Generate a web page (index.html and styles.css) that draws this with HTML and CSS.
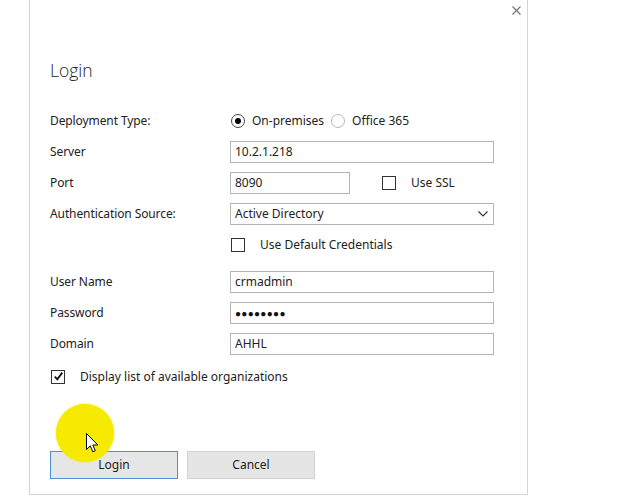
FILE: index.html
```html
<!DOCTYPE html>
<html>
<head>
<meta charset="utf-8">
<link rel="stylesheet" href="styles.css">
</head>
<body>
<div class="dialog">
  <div class="close">
    <svg width="9" height="9" viewBox="0 0 9 9"><path d="M0.5 0.5L8.5 8.5M8.5 0.5L0.5 8.5" stroke="#777" stroke-width="1.2"/></svg>
  </div>
  <div class="title">Login</div>
  <div class="form">
    <div class="row">
      <div class="label">Deployment Type:</div>
      <div class="ctrl">
        <span class="radio on"></span><span class="rtext">On-premises</span>
        <span class="radio"></span><span class="rtext">Office 365</span>
      </div>
    </div>
    <div class="row">
      <div class="label">Server</div>
      <div class="ctrl"><div class="input">10.2.1.218</div></div>
    </div>
    <div class="row">
      <div class="label">Port</div>
      <div class="ctrl">
        <div class="input short">8090</div>
        <span class="check ssl"></span><span class="ctext">Use SSL</span>
      </div>
    </div>
    <div class="row">
      <div class="label">Authentication Source:</div>
      <div class="ctrl">
        <div class="input select">Active Directory
          <svg class="chev" width="10" height="6" viewBox="0 0 10 6"><path d="M0.5 0.5L5 5L9.5 0.5" fill="none" stroke="#333" stroke-width="1.1"/></svg>
        </div>
      </div>
    </div>
    <div class="row">
      <div class="label"></div>
      <div class="ctrl"><span class="check cred"></span><span class="ctext">Use Default Credentials</span></div>
    </div>
    <div class="row gap">
      <div class="label">User Name</div>
      <div class="ctrl"><div class="input">crmadmin</div></div>
    </div>
    <div class="row">
      <div class="label">Password</div>
      <div class="ctrl"><div class="input pwd">●●●●●●●●</div></div>
    </div>
    <div class="row">
      <div class="label">Domain</div>
      <div class="ctrl"><div class="input">AHHL</div></div>
    </div>
    <div class="row disp">
      <span class="check checked"><svg width="11" height="11" viewBox="0 0 11 11"><path d="M1.8 5.6L4.3 8.3L9.3 1.6" fill="none" stroke="#111" stroke-width="1.8"/></svg></span>
      <span class="ctext wide">Display list of available organizations</span>
    </div>
  </div>
  <div class="buttons">
    <div class="btn primary">Login</div>
    <div class="btn">Cancel</div>
  </div>
  <div class="spot"></div>
  <svg class="cursor" width="13" height="21" viewBox="0 0 13 21"><path d="M0.5 0.5L0.5 16.5L4.3 12.8L6.8 18.8L9.3 17.8L6.8 12L11.8 12Z" fill="#fff" stroke="#000" stroke-width="1" stroke-linejoin="round"/></svg>
</div>
</body>
</html>
```
FILE: styles.css
```css
html, body {
  margin: 0;
  padding: 0;
  background: #ffffff;
}
body {
  font-family: "Noto Sans", "Open Sans", sans-serif;
  font-size: 12px;
  color: #222;
}
.dialog {
  position: relative;
  margin-left: 29px;
  width: 497px;
  height: 494px;
  border: 1px solid #d4d4d4;
  border-top: none;
  background: #fff;
}
.close {
  position: absolute;
  top: 6px;
  right: 6px;
  line-height: 0;
}
.title {
  padding: 58px 0 0 20px;
  font-size: 17.5px;
  font-weight: 300;
  line-height: 24px;
  color: #222;
  font-family: "Open Sans", "Noto Sans", sans-serif;
}
.form {
  padding: 23px 0 0 20px;
}
.row {
  display: flex;
  align-items: center;
  height: 31px;
}
.row.gap {
  margin-top: 6px;
}
.row.disp {
  margin-top: 2px;
}
.label {
  width: 180px;
  flex: none;
  letter-spacing: -0.1px;
}
.ctrl {
  display: flex;
  align-items: center;
  flex: 1;
}
.input {
  box-sizing: border-box;
  width: 264px;
  height: 22px;
  border: 1px solid #b4b4b4;
  padding: 0 4px;
  line-height: 20px;
  font-size: 12px;
  position: relative;
}
.input.short {
  width: 120px;
}
.input.select {
  display: flex;
  align-items: center;
  justify-content: space-between;
  padding-right: 5px;
  background: #fff;
}
.chev {
  display: block;
}
.input.pwd {
  font-size: 10px;
  letter-spacing: 0.3px;
  color: #111;
}
.radio {
  box-sizing: border-box;
  width: 14px;
  height: 14px;
  border-radius: 50%;
  border: 1px solid #b8b8b8;
  margin-left: 1px;
  position: relative;
  flex: none;
}
.radio.on {
  border-color: #444;
}
.radio.on::after {
  content: "";
  position: absolute;
  left: 3px;
  top: 3px;
  width: 6px;
  height: 6px;
  border-radius: 50%;
  background: #000;
}
.rtext {
  margin-left: 7px;
  margin-right: 6px;
}
.check {
  box-sizing: border-box;
  width: 14px;
  height: 14px;
  border: 1px solid #333;
  flex: none;
  display: flex;
  align-items: center;
  justify-content: center;
}
.check.ssl {
  margin-left: 32px;
}
.check.cred {
  margin-left: 1px;
}
.check.checked {
  margin-left: 1px;
}
.ctext {
  margin-left: 15px;
}
.ctext.wide {
  margin-left: 15px;
}
.buttons {
  display: flex;
  gap: 9px;
  padding: 59px 0 0 20px;
}
.btn {
  box-sizing: border-box;
  width: 128px;
  height: 28px;
  border: 1px solid #d2d2d2;
  background: #e5e5e5;
  text-align: center;
  line-height: 26px;
  color: #1b1b1b;
}
.btn.primary {
  border-color: #4f8fd8;
  background: #e6e6e6;
}
.spot {
  position: absolute;
  left: 26px;
  top: 404px;
  width: 58px;
  height: 58px;
  border-radius: 50%;
  background: #f6ea00;
  box-shadow: 0 0 2px #f6ea00;
}
.cursor {
  position: absolute;
  left: 56px;
  top: 433px;
}
```
